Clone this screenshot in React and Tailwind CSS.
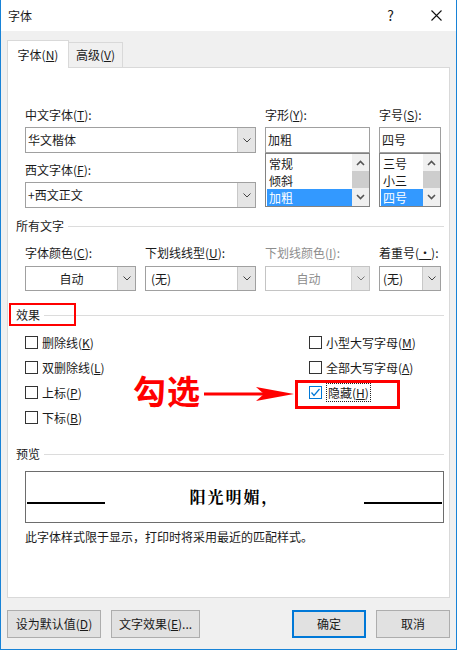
import React from "react";

const Chev = ({ color = "#444" }) => (
  <svg width="8" height="5" viewBox="0 0 8 5">
    <path d="M0.5 0.5L4 4L7.5 0.5" stroke={color} strokeWidth="1" fill="none" />
  </svg>
);

const Arrow = ({ up }) => (
  <svg width="9" height="6" viewBox="0 0 9 6">
    <path d={up ? "M1 5L4.5 1.5L8 5" : "M1 1L4.5 4.5L8 1"} stroke="#555" strokeWidth="1.6" fill="none" />
  </svg>
);

const Box = ({ checked }) =>
  checked ? (
    <div className="w-[13px] h-[13px] border border-[#0078d7] bg-white flex items-center justify-center">
      <svg width="11" height="11" viewBox="0 0 11 11">
        <path d="M1.5 5.5L4 8.5L9.5 2" stroke="#0078d7" strokeWidth="1.2" fill="none" />
      </svg>
    </div>
  ) : (
    <div className="w-[13px] h-[13px] border border-[#333333] bg-white" />
  );

const Check = ({ children, checked }) => (
  <div className="h-[25px] flex items-center gap-[4px]">
    <Box checked={checked} />
    <span className={checked ? "px-[1px] border border-dotted border-[#222] leading-[17px]" : ""}>{children}</span>
  </div>
);

const Section = ({ title }) => (
  <div className="h-[16px] flex items-center gap-[4px] -ml-[9px]">
    <span>{title}</span>
    <div className="flex-1 h-px bg-[#dcdcdc]" />
  </div>
);

const List = ({ items, sel }) => (
  <div className="h-[54px] border border-[#828282] bg-white flex">
    <div className="flex-1 flex flex-col pl-[1px] pt-[1px]">
      {items.map((t) => (
        <div
          key={t}
          className={
            t === sel
              ? "h-[17px] leading-[17px] pl-[2px] bg-[#3399ff] text-white"
              : "h-[17px] leading-[17px] pl-[2px]"
          }
        >
          {t}
        </div>
      ))}
    </div>
    <div className="w-[17px] bg-[#f0f0f0] flex flex-col items-center">
      <div className="h-[17px] flex items-center justify-center">
        <Arrow up />
      </div>
      <div className="w-[17px] h-[17px] bg-[#cdcdcd]" />
      <div className="h-[17px] flex items-center justify-center">
        <Arrow />
      </div>
    </div>
  </div>
);

const Btn = ({ children, primary, w }) => (
  <div
    className={
      primary
        ? `${w} h-[28px] bg-[#e1e1e1] border-2 border-[#0078d7] flex items-center justify-center`
        : `${w} h-[28px] bg-[#e1e1e1] border border-[#adadad] flex items-center justify-center`
    }
  >
    {children}
  </div>
);

export default function App() {
  return (
    <div className="w-[457px] h-[650px] bg-[#f0f0f0] border-x border-b border-[#1883d7] flex flex-col text-[12px] text-[#1a1a1a] font-['Noto_Sans_CJK_SC','Microsoft_YaHei',sans-serif] relative overflow-hidden">
      {/* title bar */}
      <div className="h-[31px] bg-white flex items-center pl-[7px] pr-[14px]">
        <span className="flex-1">字体</span>
        <span className="text-[14px] mr-[37px]">?</span>
        <svg width="11" height="11" viewBox="0 0 11 11">
          <path d="M0.5 0.5L10.5 10.5M10.5 0.5L0.5 10.5" stroke="#111" strokeWidth="1.1" />
        </svg>
      </div>

      <div className="px-[6px] pt-[9px] flex flex-col">
        {/* tabs */}
        <div className="flex items-end h-[27px] relative z-10">
          <div className="w-[62px] h-[28px] bg-white border-x border-t border-[#d9d9d9] flex items-center justify-center -mb-px">
            字体(<u>N</u>)
          </div>
          <div className="w-[54px] h-[25px] bg-[#f0f0f0] border-r border-t border-[#d9d9d9] flex items-center justify-center">
            高级(<u>V</u>)
          </div>
        </div>

        {/* panel */}
        <div className="h-[531px] bg-white border border-[#d9d9d9] pl-[17px] pr-[5px] pt-[39px]">
          {/* font pickers */}
          <div className="flex gap-[9px]">
            <div className="w-[231px] flex flex-col">
              <div className="h-[16px] leading-[16px]">中文字体(<u>T</u>):</div>
              <div className="mt-[4px] h-[26px] border border-[#a0a0a0] flex">
                <div className="flex-1 pl-[2px] flex items-center">华文楷体</div>
                <div className="w-[18px] bg-[#e5e5e5] border-l border-[#c8c8c8] flex items-center justify-center">
                  <Chev />
                </div>
              </div>
              <div className="mt-[9px] h-[16px] leading-[16px]">西文字体(<u>F</u>):</div>
              <div className="mt-[4px] h-[26px] border border-[#a0a0a0] flex">
                <div className="flex-1 pl-[2px] flex items-center">+西文正文</div>
                <div className="w-[18px] bg-[#e5e5e5] border-l border-[#c8c8c8] flex items-center justify-center">
                  <Chev />
                </div>
              </div>
            </div>
            <div className="w-[105px] flex flex-col">
              <div className="h-[16px] leading-[16px]">字形(<u>Y</u>):</div>
              <div className="mt-[4px] h-[26px] border border-[#a0a0a0] pl-[2px] flex items-center">加粗</div>
              <List items={["常规", "倾斜", "加粗"]} sel="加粗" />
            </div>
            <div className="w-[62px] flex flex-col">
              <div className="h-[16px] leading-[16px]">字号(<u>S</u>):</div>
              <div className="mt-[4px] h-[26px] border border-[#a0a0a0] pl-[2px] flex items-center">四号</div>
              <List items={["三号", "小三", "四号"]} sel="四号" />
            </div>
          </div>

          {/* all text */}
          <div className="mt-[10px]">
            <Section title="所有文字" />
          </div>
          <div className="mt-[11px] flex gap-[9px]">
            <div className="w-[111px] flex flex-col">
              <div className="h-[16px] leading-[16px]">字体颜色(<u>C</u>):</div>
              <div className="mt-[5px] h-[25px] border border-[#a0a0a0] flex">
                <div className="flex-1 flex items-center justify-center">自动</div>
                <div className="w-[18px] bg-[#e5e5e5] border-l border-[#c8c8c8] flex items-center justify-center">
                  <Chev />
                </div>
              </div>
            </div>
            <div className="w-[111px] flex flex-col">
              <div className="h-[16px] leading-[16px]">下划线线型(<u>U</u>):</div>
              <div className="mt-[5px] h-[25px] border border-[#a0a0a0] flex">
                <div className="flex-1 pl-[5px] flex items-center">(无)</div>
                <div className="w-[18px] bg-[#e5e5e5] border-l border-[#c8c8c8] flex items-center justify-center">
                  <Chev />
                </div>
              </div>
            </div>
            <div className="w-[105px] flex flex-col text-[#8d8d8d]">
              <div className="h-[16px] leading-[16px]">下划线颜色(<u>I</u>):</div>
              <div className="mt-[5px] h-[25px] border border-[#c4c4c4] flex">
                <div className="flex-1 flex items-center justify-center">自动</div>
                <div className="w-[18px] bg-[#e5e5e5] border-l border-[#d4d4d4] flex items-center justify-center">
                  <Chev color="#777" />
                </div>
              </div>
            </div>
            <div className="w-[62px] flex flex-col">
              <div className="h-[16px] leading-[16px]">着重号(<u>·</u>):</div>
              <div className="mt-[5px] h-[25px] border border-[#a0a0a0] flex">
                <div className="flex-1 pl-[3px] flex items-center">(无)</div>
                <div className="w-[18px] bg-[#e5e5e5] border-l border-[#c8c8c8] flex items-center justify-center">
                  <Chev />
                </div>
              </div>
            </div>
          </div>

          {/* effects */}
          <div className="mt-[16px]">
            <Section title="效果" />
          </div>
          <div className="mt-[7px] flex">
            <div className="w-[284px] flex flex-col">
              <Check>删除线(<u>K</u>)</Check>
              <Check>双删除线(<u>L</u>)</Check>
              <Check>上标(<u>P</u>)</Check>
              <Check>下标(<u>B</u>)</Check>
            </div>
            <div className="flex flex-col">
              <Check>小型大写字母(<u>M</u>)</Check>
              <Check>全部大写字母(<u>A</u>)</Check>
              <Check checked>隐藏(<u>H</u>)</Check>
            </div>
          </div>

          {/* preview */}
          <div className="mt-[16px]">
            <Section title="预览" />
          </div>
          <div className="mt-[9px] h-[52px] border border-[#6d6d6d] flex items-center px-[1px]">
            <div className="w-[78px] h-[2px] bg-black mt-[12px]" />
            <div className="flex-1 text-center text-[16px] font-bold tracking-[2px] font-['Noto_Serif_CJK_SC','Noto_Sans_CJK_SC',serif] text-black">
              阳光明媚，
            </div>
            <div className="w-[78px] h-[2px] bg-black mt-[12px]" />
          </div>
          <div className="mt-[6px] h-[16px] leading-[16px]">此字体样式限于显示，打印时将采用最近的匹配样式。</div>
        </div>

        {/* buttons */}
        <div className="mt-[12px] flex">
          <Btn w="w-[94px]">设为默认值(<u>D</u>)</Btn>
          <div className="w-[10px]" />
          <Btn w="w-[89px]">文字效果(<u>E</u>)...</Btn>
          <div className="flex-1" />
          <Btn primary w="w-[74px]">确定</Btn>
          <div className="w-[10px]" />
          <Btn w="w-[74px]">取消</Btn>
        </div>
      </div>

      {/* annotations */}
      <div className="absolute left-[8px] top-[303px] w-[67px] h-[23px] border-2 border-[#ff0000]" />
      <div className="absolute left-[294px] top-[380px] w-[105px] h-[29px] border-[3px] border-[#ff0000]" />
      <div className="absolute left-[132px] top-[370px] text-[33px] leading-[40px] font-bold text-[#ff0000] tracking-[1px]">
        勾选
      </div>
      <svg className="absolute left-[203px] top-[386px]" width="91" height="16" viewBox="0 0 91 16">
        <path d="M0 8H60" stroke="#ff0000" strokeWidth="3" />
        <path d="M52 1L90 8L52 15L60 8Z" fill="#ff0000" />
      </svg>
    </div>
  );
}
